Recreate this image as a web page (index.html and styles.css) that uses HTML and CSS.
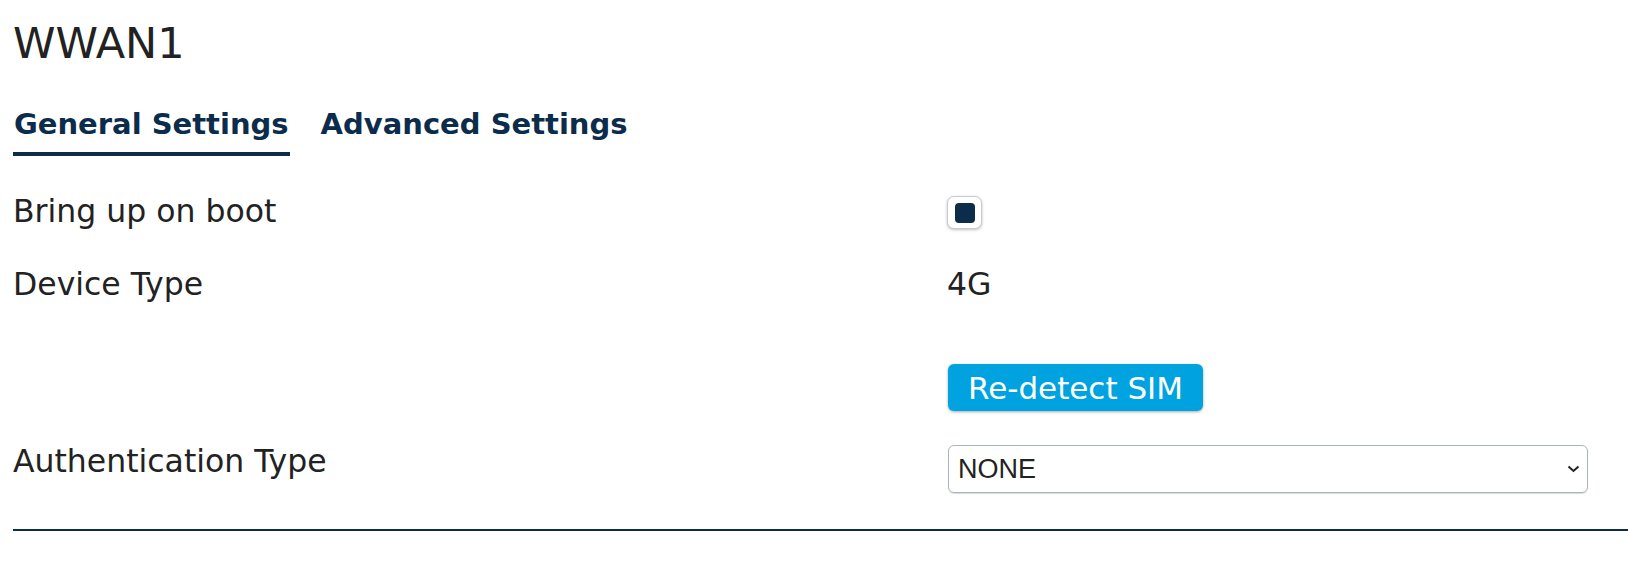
FILE: index.html
```html
<!DOCTYPE html>
<html lang="en">
<head>
  <meta charset="UTF-8" />
  <title>WWAN1</title>
  <link rel="stylesheet" href="styles.css">
</head>
<body>

  <div class="page">
    <h1 class="title">WWAN1</h1>

    <!-- Tabs -->
    <div class="tabs">
      <div class="tab active">General Settings</div>
      <div class="tab">Advanced Settings</div>
    </div>

    <!-- Form -->
    <div class="form">
      <div class="row row-boot">
        <div class="label">Bring up on boot</div>
        <div class="value">
          <span class="checkbox"><span class="check-mark"></span></span>
        </div>
      </div>

      <div class="row row-type">
        <div class="label">Device Type</div>
        <div class="value">4G</div>
      </div>

      <div class="row row-button">
        <div class="label"></div>
        <div class="value">
          <button class="button">Re-detect SIM</button>
        </div>
      </div>

      <div class="row">
        <div class="label">Authentication Type</div>
        <div class="value">
          <div class="select">
            <span>NONE</span>
            <svg class="chevron" width="13" height="8" viewBox="0 0 13 8">
              <path d="M1.5 1.5 L6.5 6 L11.5 1.5" fill="none" stroke="#222" stroke-width="2"/>
            </svg>
          </div>
        </div>
      </div>
    </div>

    <div class="divider"></div>
  </div>

</body>
</html>
```

FILE: styles.css
```css
body, html {
  margin: 0; padding: 0;
  background: #fff;
  font-family: 'DejaVu Sans', sans-serif;
  color: #222;
}

.page {
  padding: 19px 0 0 13px;
}

.title {
  margin: 0;
  font-size: 43px;
  font-weight: normal;
  line-height: 48px;
  color: #222;
}

/* Tabs */
.tabs {
  display: flex;
  gap: 30px;
  margin-top: 39px;
}

.tab {
  font-size: 29px;
  font-weight: bold;
  color: #0b2c4a;
  line-height: 36px;
  padding: 0 1px 10px 1px;
  border-bottom: 4px solid transparent;
}
.tab.active {
  border-bottom-color: #0b2c4a;
}

/* Form rows */
.form {
  margin-top: 35px;
}

.row {
  display: grid;
  grid-template-columns: 934px 1fr;
  align-items: start;
}

.row-boot {
  margin-bottom: 33px;
}
.row-type {
  margin-bottom: 60px;
}
.row-button {
  margin-bottom: 30px;
}

.label, .value {
  font-size: 31.5px;
  line-height: 40px;
}

.checkbox {
  display: flex;
  align-items: center;
  justify-content: center;
  box-sizing: border-box;
  width: 35px;
  height: 33px;
  margin-top: 5px;
  border: 1px solid #c5ccd6;
  border-radius: 7px;
  box-shadow: 0 1px 3px rgba(0, 0, 0, 0.25);
  background: #fff;
}
.check-mark {
  width: 20px;
  height: 20px;
  border-radius: 4px;
  background: #0b2c4a;
}

.button {
  display: block;
  margin-left: 1px;
  font-family: 'DejaVu Sans', sans-serif;
  font-size: 31px;
  color: #fff;
  background: #00a3e0;
  border: none;
  border-radius: 6px;
  padding: 0;
  width: 255px;
  height: 47px;
  box-shadow: 0 1px 3px rgba(0, 0, 0, 0.35);
  cursor: pointer;
}

.select {
  display: flex;
  align-items: center;
  justify-content: space-between;
  box-sizing: border-box;
  width: 640px;
  height: 48px;
  margin: 4px 0 0 1px;
  padding: 0 7px 0 9px;
  border: 1px solid #aab4c2;
  border-radius: 6px;
  box-shadow: 0 1px 1px rgba(0, 0, 0, 0.15);
  font-family: 'Liberation Sans', Arial, sans-serif;
  font-size: 27px;
  line-height: 30px;
  color: #222;
}

.divider {
  height: 2px;
  background: #0b2c4a;
  margin-top: 36px;
}
```
